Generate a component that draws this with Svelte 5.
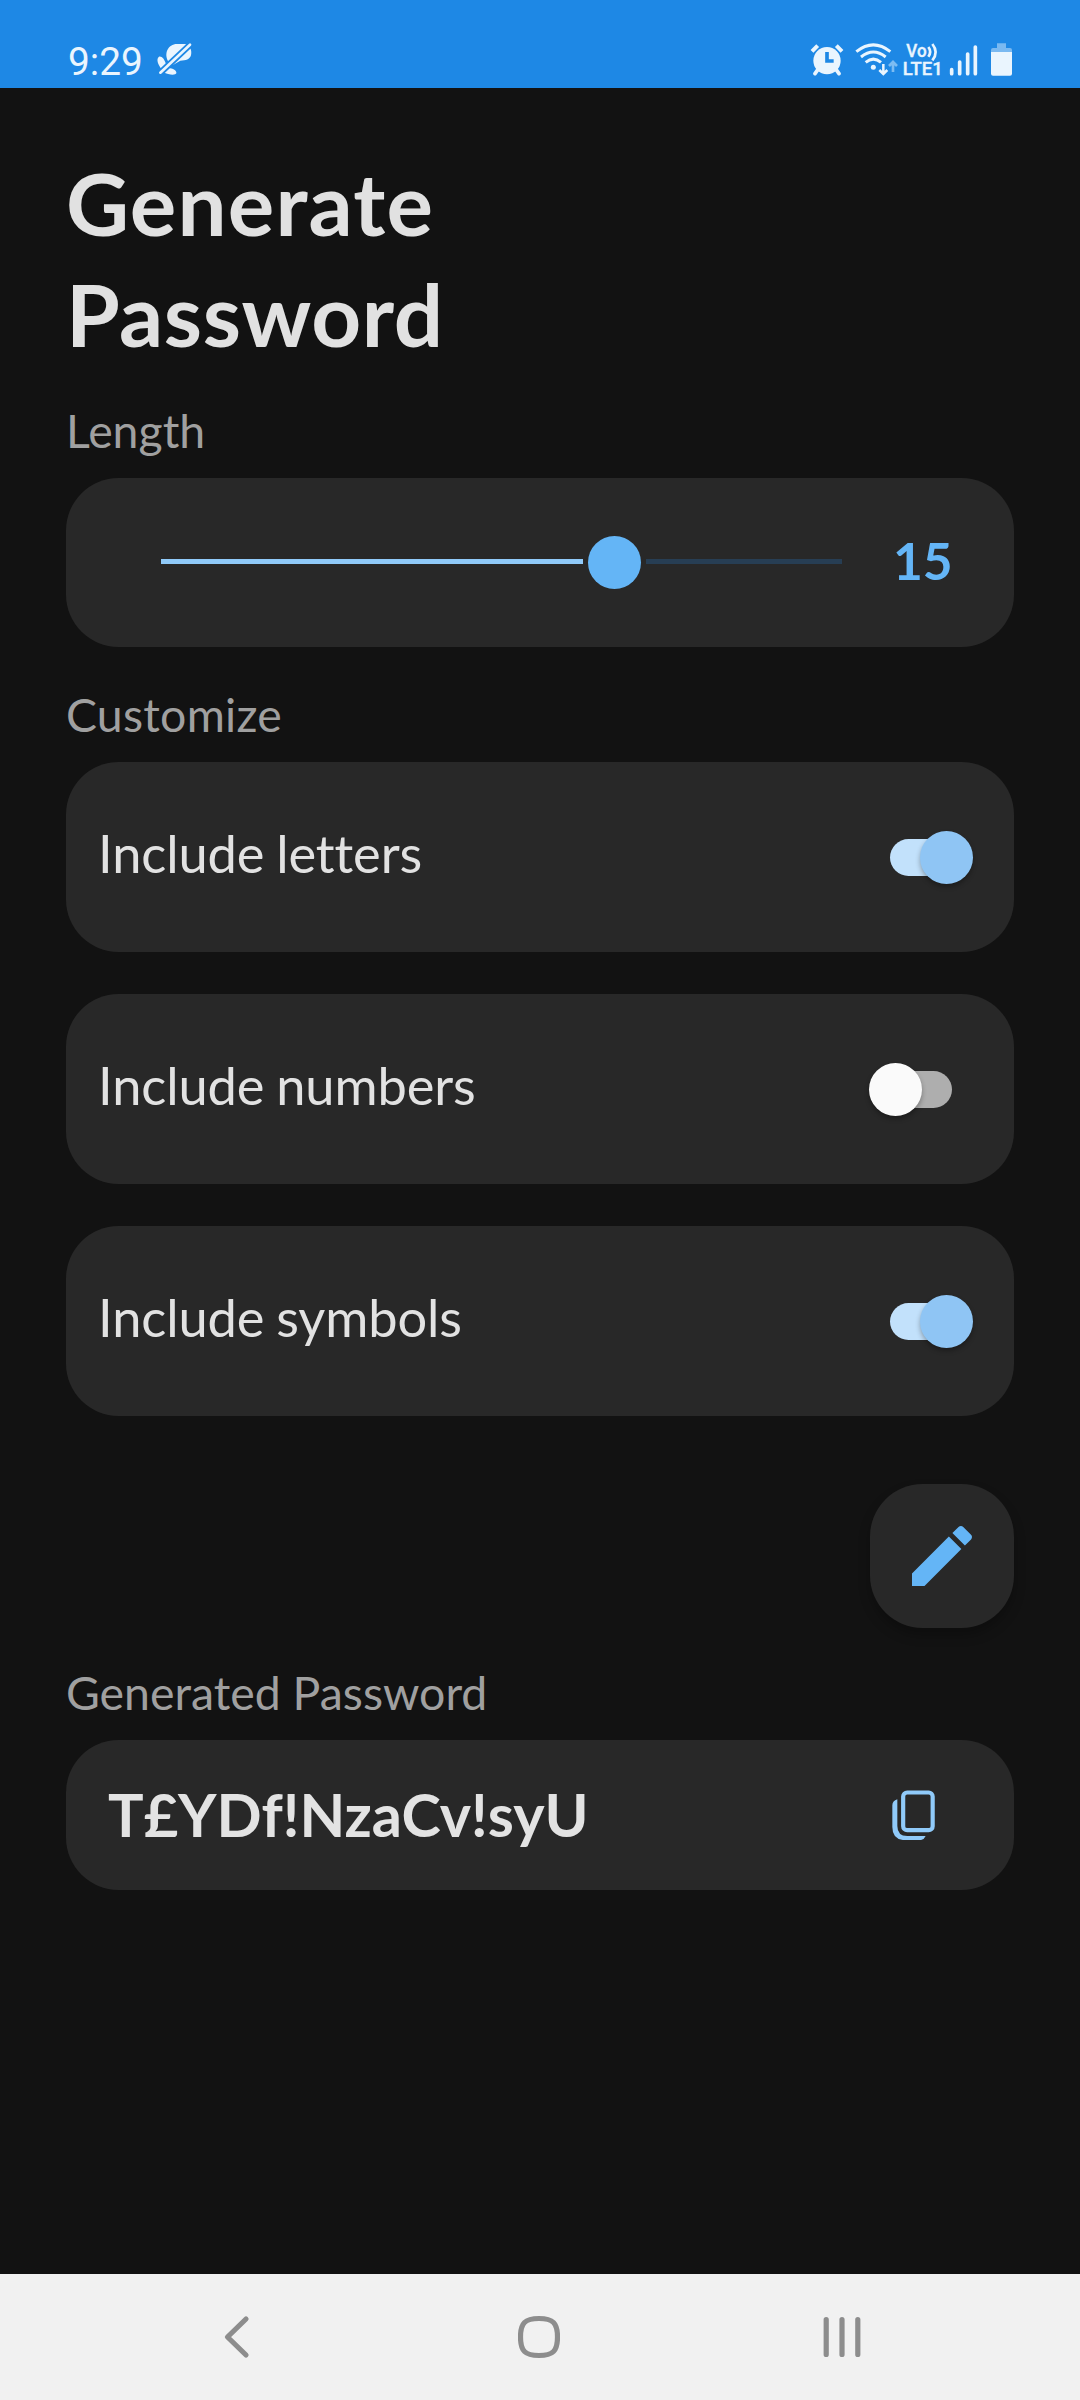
<script lang="ts">
  const min = 5;
  const max = 20;
  let length = $state(15);
  let options = $state([
    { label: 'Include letters', on: true },
    { label: 'Include numbers', on: false },
    { label: 'Include symbols', on: true }
  ]);
  const password = 'T£YDf!NzaCv!syU';
  const filled = $derived(((length - min) / (max - min)) * 100);
</script>

<div class="screen">
  <header class="status">
    <span class="clock">9:29</span>
    <svg class="muted" width="37" height="34" viewBox="348 66 111 102" fill="#eaf5fe">
      <path d="M411 72 H436 C450 76 457 92 453 106 C449 118 438 122 421 122 L400 134 L386 126 C370 102 384 72 411 72 Z" />
      <path d="M357 110 C366 108 373 118 378 132 L365 147 C353 134 348 116 357 110 Z" />
      <path d="M385 144 C399 144 411 153 409 160 C406 167 385 165 370 156 Z" />
      <path d="M352 167 L460 65" stroke="#1e88e5" stroke-width="19" />
      <path d="M361 158 L450 74" stroke="#eaf5fe" stroke-width="8" stroke-linecap="round" />
    </svg>
    <span class="spacer"></span>
    <svg class="alarm" width="34" height="33" viewBox="60 69 102 99" fill="#eaf5fe">
      <circle cx="111" cy="122" r="41" />
      <path d="M66 94 L83 77 M156 94 L139 77" stroke="#eaf5fe" stroke-width="12" />
      <path d="M84 148 L75 161 M138 148 L147 161" stroke="#eaf5fe" stroke-width="11" stroke-linecap="round" />
      <path d="M111 96 V123 H131" fill="none" stroke="#1e88e5" stroke-width="11" />
    </svg>
    <svg class="wifi" width="43" height="33" viewBox="195 69 129 99" fill="none" stroke="#eaf5fe" stroke-width="9">
      <path d="M199 95 Q250 54 301 95" />
      <path d="M213 111 Q250 81 287 111" />
      <path d="M227 127 Q250 108 273 127" />
      <circle cx="250" cy="142" r="7.500" fill="#eaf5fe" stroke="none" />
      <path d="M280 132 V162 M268 150 L280 162 L292 150" stroke-width="7.500" />
      <path d="M309 156 V127 M297 138 L309 126 L321 138" stroke="#7dbcf2" stroke-width="8" />
    </svg>
    <svg class="volte" width="40" height="33" viewBox="336 69 120 99">
      <text x="349" y="110" textLength="61" lengthAdjust="spacingAndGlyphs">Vo</text>
      <path d="M415 81 Q426 95 415 110 M427 72 Q447 97 427 121" fill="none" stroke="#eaf5fe" stroke-width="8" />
      <text x="338" y="165" textLength="120" lengthAdjust="spacingAndGlyphs">LTE1</text>
    </svg>
    <svg class="signal" width="29" height="33" viewBox="477 69 87 99" stroke="#eaf5fe" stroke-width="11" stroke-linecap="round">
      <path d="M485 149 V161 M509 126 V161 M533 102 V161 M556 81 V161" />
    </svg>
    <svg class="battery" width="21" height="33" viewBox="603 69 63 99">
      <path d="M621 70 H648 V84 H660 Q666 84 666 90 V97 H603 V90 Q603 84 609 84 H621 Z" fill="#7ab9f1" />
      <path d="M603 96 H666 V161 Q666 167 660 167 H609 Q603 167 603 161 Z" fill="#eaf5fe" />
    </svg>
  </header>

  <main>
    <h1><span class="wide">Generate</span><span>Password</span></h1>

    <h2>Length</h2>
    <section class="card length">
      <div class="slider">
        <div class="active" style="width: {filled}%"></div>
        <div class="thumb"></div>
        <div class="rest"></div>
      </div>
      <span class="value">{length}</span>
    </section>

    <h2 class="customize">Customize</h2>
    <div class="options">
      {#each options as option}
        <section class="card option">
          <span class="name">{option.label}</span>
          <button
            class="switch"
            class:on={option.on}
            aria-label={option.label}
            onclick={() => (option.on = !option.on)}
          >
            <span class="knob"></span>
          </button>
        </section>
      {/each}
    </div>

    <button class="generate" aria-label="Generate">
      <svg width="80" height="80" viewBox="0 0 24 24" fill="#64b5f6">
        <path d="M20.71 7.04C21.1 6.65 21.1 6 20.71 5.63L18.37 3.29C18 2.9 17.35 2.9 16.96 3.29L15.12 5.12L18.87 8.87M3 17.25V21H6.75L17.81 9.93L14.06 6.18L3 17.25Z" />
      </svg>
    </button>

    <h2 class="generated">Generated Password</h2>
    <section class="card result">
      <span class="password">{password}</span>
      <svg class="copy" width="43" height="50" viewBox="126 209 129 150" fill="none" stroke="#90caf9" stroke-width="12.5">
        <rect x="159.500" y="216.500" width="88.500" height="113" rx="12" />
        <path d="M142 237 V317 Q142 347 172 347 H227 Q222 359 209 359.500 H166 Q127 359 127 320 V255 Q127 242 142 237 Z" fill="#90caf9" stroke="none" />
      </svg>
    </section>
  </main>

  <nav>
    <svg width="42" height="44" viewBox="0 0 42 44"><path d="M31 4 L12.500 22 L31 40" /></svg>
    <svg width="42" height="44" viewBox="0 0 42 44">
      <path d="M21 3.500 C35 3.500 39.500 8 39.500 22 C39.500 36 35 40.500 21 40.500 C7 40.500 2.500 36 2.500 22 C2.500 8 7 3.500 21 3.500 Z" />
    </svg>
    <svg width="42" height="44" viewBox="0 0 42 44"><path d="M5.200 4.500 V39.500 M21 4.500 V39.500 M36.800 4.500 V39.500" /></svg>
  </nav>
</div>

<style>
  :global(body) {
    margin: 0;
    background: #121212;
  }
  .screen {
    width: 1080px;
    height: 2400px;
    display: flex;
    flex-direction: column;
    background: #121212;
    color: #e2e2e2;
    font-family: Lato, 'Open Sans', sans-serif;
    font-variant-ligatures: none;
  }
  svg {
    display: block;
    flex: none;
  }
  button {
    border: 0;
    padding: 0;
    flex: none;
  }

  .status {
    height: 88px;
    box-sizing: border-box;
    padding: 42px 68px 0;
    display: flex;
    align-items: flex-start;
    background: #1e88e5;
  }
  .clock {
    width: 88px;
    padding-top: 1px;
    font: 38.8px/38px Roboto, sans-serif;
    color: #eaf5fe;
  }
  .spacer {
    flex: 1;
  }
  .alarm,
  .wifi,
  .volte,
  .signal,
  .battery {
    margin-top: 1px;
  }
  .alarm {
    margin-right: 11px;
  }
  .wifi {
    margin-right: 4px;
  }
  .volte {
    margin-right: 7px;
    overflow: visible;
  }
  .volte text {
    font: 500 53px Roboto, sans-serif;
    fill: #eaf5fe;
    stroke: #eaf5fe;
    stroke-width: 1;
  }
  .signal {
    margin-right: 13px;
  }

  main {
    flex: 1;
    padding: 59px 66px 0;
    display: flex;
    flex-direction: column;
  }
  h1 {
    margin: 0 0 33px;
    font-size: 87px;
    line-height: 111px;
    font-weight: 700;
    letter-spacing: 0.6px;
    color: #e1e1e1;
  }
  h1 span {
    display: block;
  }
  .wide {
    letter-spacing: 1.2px;
  }
  h2 {
    margin: 0 0 20px;
    font-size: 46.400px;
    line-height: 56px;
    font-weight: 400;
    color: #a0a0a0;
  }
  .customize {
    margin-top: 39px;
    letter-spacing: 0.25px;
  }
  .generated {
    margin-top: 36px;
  }

  .card {
    box-sizing: border-box;
    flex: none;
    display: flex;
    align-items: center;
    border-radius: 52.500px;
    background: #282828;
  }
  .length {
    height: 169px;
    padding-left: 95px;
    gap: 51px;
  }
  .slider {
    width: 681px;
    padding-bottom: 2px;
    display: flex;
    align-items: center;
  }
  .active {
    box-sizing: border-box;
    height: 5px;
    margin-right: -32px;
    background: #90caf9;
    border-right: 32px solid #282828;
  }
  .thumb {
    flex: none;
    width: 53px;
    height: 53px;
    border-radius: 50%;
    margin: 1px 5px 0;
    background: #64b5f6;
  }
  .rest {
    flex: 1;
    height: 5px;
    background: #273e54;
  }
  .value {
    padding-bottom: 5px;
    font-size: 51.500px;
    line-height: 60px;
    font-weight: 700;
    color: #64b5f6;
  }

  .options {
    display: flex;
    flex-direction: column;
    gap: 42px;
  }
  .option {
    height: 190px;
    padding: 0 62px 0 32px;
    justify-content: space-between;
  }
  .name {
    padding-bottom: 8px;
    font-size: 52.400px;
    line-height: 64px;
    letter-spacing: -0.1px;
    word-spacing: -1.5px;
  }
  .switch {
    width: 62px;
    height: 37px;
    border-radius: 19px;
    display: flex;
    align-items: center;
    background: #aeaeae;
  }
  .knob {
    flex: none;
    width: 53px;
    height: 53px;
    margin-left: -21px;
    border-radius: 50%;
    background: #fafafa;
    box-shadow: 0 3px 5px rgba(0, 0, 0, 0.3);
  }
  .switch.on {
    background: #c2e1fb;
  }
  .switch.on .knob {
    margin-left: 30px;
    background: #8fc5f4;
  }

  .generate {
    width: 144px;
    height: 144px;
    margin-top: 68px;
    align-self: flex-end;
    display: flex;
    align-items: center;
    justify-content: center;
    border-radius: 52.500px;
    background: #282828;
    box-shadow: 0 7px 12px rgba(0, 0, 0, 0.25);
  }

  .result {
    height: 150px;
    padding: 0 79px 0 42px;
    justify-content: space-between;
  }
  .password {
    padding-bottom: 2px;
    font-size: 59.400px;
    line-height: 72px;
    font-weight: 700;
    color: #e3e3e3;
  }

  nav {
    height: 126px;
    box-sizing: border-box;
    flex: none;
    display: flex;
    align-items: center;
    padding: 0 217px 0 215px;
    justify-content: space-between;
    background: #f1f1f1;
  }
  nav svg {
    fill: none;
    stroke: #8d8d8d;
    stroke-width: 5.200;
    stroke-linecap: round;
    stroke-linejoin: round;
  }
</style>
